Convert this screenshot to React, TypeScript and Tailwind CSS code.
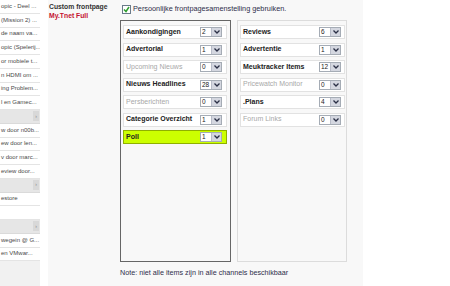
import React from "react";

const SIDEBAR: { text: string; header?: boolean }[] = [
  { text: "opic - Deel ..." },
  { text: "(Mission 2) ..." },
  { text: "de naam va..." },
  { text: "opic (Spelerij..." },
  { text: "or mobiele t..." },
  { text: "n HDMI om ..." },
  { text: "ing Problem..." },
  { text: "l en Gamec..." },
  { text: "", header: true },
  { text: "w door n00b..." },
  { text: "ew door len..." },
  { text: "v door marc..." },
  { text: "eview door..." },
  { text: "", header: true },
  { text: "estore" },
  { text: "" },
  { text: "", header: true },
  { text: "wegein @ G..." },
  { text: "en VMwar..." },
];

type Item = { label: string; value: string; off?: boolean; hl?: boolean };

const LEFT: Item[] = [
  { label: "Aankondigingen", value: "2" },
  { label: "Advertorial", value: "1" },
  { label: "Upcoming Nieuws", value: "0", off: true },
  { label: "Nieuws Headlines", value: "28" },
  { label: "Persberichten", value: "0", off: true },
  { label: "Categorie Overzicht", value: "1" },
  { label: "Poll", value: "1", hl: true },
];

const RIGHT: Item[] = [
  { label: "Reviews", value: "6" },
  { label: "Advertentie", value: "1" },
  { label: "Meuktracker Items", value: "12" },
  { label: "Pricewatch Monitor", value: "0", off: true },
  { label: ".Plans", value: "4" },
  { label: "Forum Links", value: "0", off: true },
];

function Select({ value }: { value: string }) {
  return (
    <div className="flex h-[10px] border border-[#a5acb5] bg-white">
      <div className="w-[10px] pl-[1px] text-[6.5px] leading-[8px] text-[#222]">{value}</div>
      <div className="flex w-[10px] items-center justify-center bg-[#d4d7e0] border-l border-[#b8bcc8]">
        <svg width="6" height="4" viewBox="0 0 6 4">
          <path d="M0.5 0.5 L3 3 L5.5 0.5" fill="none" stroke="#2a2f45" strokeWidth="1.3" />
        </svg>
      </div>
    </div>
  );
}

function Row({ item, right }: { item: Item; right?: boolean }) {
  return (
    <div
      className={
        "flex h-[14px] items-center justify-between border pl-[2px] " +
        (right ? "pr-[3px] " : "pr-[4px] ") +
        (item.hl ? "bg-[#ccff00] border-[#8fb000]" : "bg-white border-[#e2e2e2]")
      }
    >
      <span
        className={
          "text-[7px] whitespace-nowrap " + (item.off ? "text-[#a8a8a8] font-normal" : "text-[#222] font-bold")
        }
      >
        {item.label}
      </span>
      <Select value={item.value} />
    </div>
  );
}

export default function App() {
  return (
    <div
      className="flex h-[286px] w-[450px] overflow-hidden bg-white"
      style={{ fontFamily: '"Liberation Sans", Arial, sans-serif' }}
    >
      {/* sidebar */}
      <div className="flex w-[40px] flex-col bg-[#f1f1f1]">
        {SIDEBAR.map((r, i) =>
          r.header ? (
            <div
              key={i}
              className="flex h-[13.75px] items-center justify-end border-b border-[#dadada] bg-[#e6e6e6] pr-[1px]"
            >
              <div className="flex h-[10px] w-[6px] items-center justify-center bg-[#d8d8d8] text-[5px] text-[#888]">
                ›
              </div>
            </div>
          ) : (
            <div
              key={i}
              className="flex h-[13.75px] items-center overflow-hidden whitespace-nowrap border-b border-[#e4e4e4] bg-white pl-[1px] text-[6px] text-[#4a4a4a]"
            >
              {r.text}
            </div>
          )
        )}
      </div>

      <div className="w-[8px] bg-white" />

      {/* main */}
      <div className="flex w-[315px] bg-[#f8f8f8]">
        <div className="w-[72px] pl-[1px] pt-[3px] leading-[8.5px]">
          <div className="text-[6.8px] font-bold text-[#333]">Custom frontpage</div>
          <div className="text-[6.8px] font-bold text-[#c4122f]">My.Tnet Full</div>
        </div>

        <div className="flex w-[228px] flex-col">
          <div className="flex h-[20px] items-center gap-[2px] pl-[2px] pb-[1px]">
            <div className="flex h-[9px] w-[9px] items-center justify-center border border-[#6a7a8a] bg-white">
              <svg width="7" height="7" viewBox="0 0 7 7">
                <path d="M1 3.5 L3 5.5 L6 1" fill="none" stroke="#2e9e2e" strokeWidth="1.5" />
              </svg>
            </div>
            <span className="text-[7.3px] text-[#2e2e4a] whitespace-nowrap">
              Persoonlijke frontpagesamenstelling gebruiken.
            </span>
          </div>

          <div className="flex h-[242px] gap-[6px]">
            <div className="flex w-[111px] flex-col gap-[3.5px] border border-[#666] pl-[2px] pr-[3px] pt-[4px]">
              {LEFT.map((it) => (
                <Row key={it.label} item={it} />
              ))}
            </div>
            <div className="flex w-[110px] flex-col gap-[3.5px] border border-[#dcdcdc] pl-[2px] pr-[1px] pt-[4px]">
              {RIGHT.map((it) => (
                <Row key={it.label} item={it} right />
              ))}
            </div>
          </div>

          <div className="pt-[6px] text-[7.2px] text-[#2e2e4a] whitespace-nowrap">
            Note: niet alle items zijn in alle channels beschikbaar
          </div>
        </div>
      </div>
    </div>
  );
}
